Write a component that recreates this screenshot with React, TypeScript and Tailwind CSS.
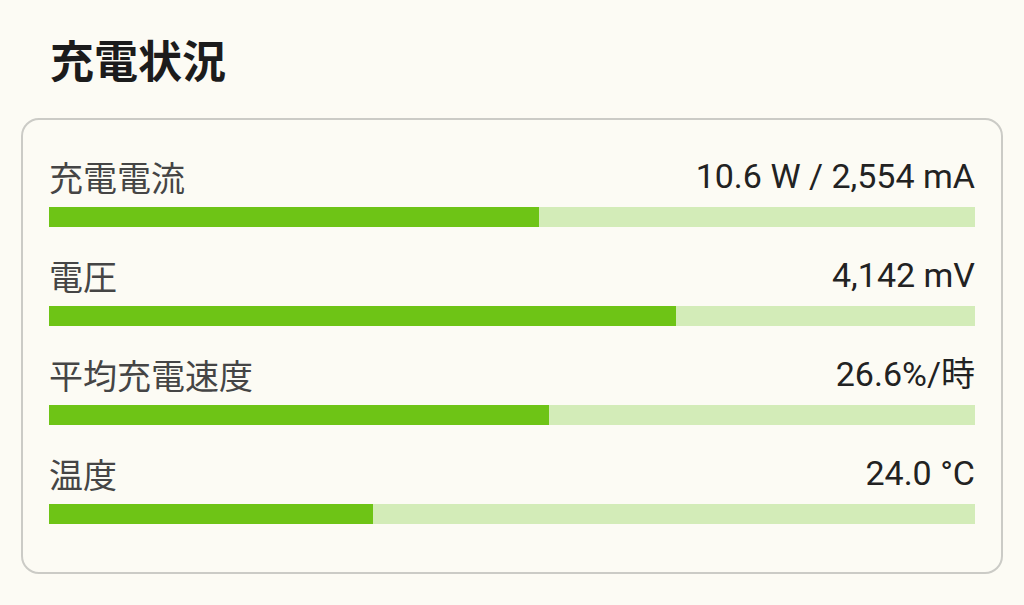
import React from "react";

const rows = [
  { label: "充電電流", value: "10.6 W / 2,554 mA", pct: 52.9 },
  { label: "電圧", value: "4,142 mV", pct: 67.7 },
  { label: "平均充電速度", value: "26.6%/時", pct: 54.0 },
  { label: "温度", value: "24.0 °C", pct: 35.0 },
];

export default function App() {
  return (
    <div
      className="w-[1024px] h-[605px] bg-[#fcfbf4] overflow-hidden pl-[21px] pr-[21px] pt-[28px]"
      style={{ fontFamily: 'Roboto, "Noto Sans CJK JP", sans-serif' }}
    >
      <h1
        className="text-[44px] leading-[62px] font-bold text-[#1c1c1c] pl-[29px] mb-[28px]"
        style={{ fontFamily: '"Noto Sans CJK JP", sans-serif' }}
      >
        充電状況
      </h1>
      <div className="border-2 border-[#cbcbc6] rounded-[18px] px-[26px] pt-[36px] pb-[20px]">
        {rows.map((r) => (
          <div key={r.label} className="mb-[28px]">
            <div className="flex justify-between items-center h-[40px] mb-[11px]">
              <span
                className="text-[34px] text-[#454545]"
                style={{ fontFamily: '"Noto Sans CJK JP", sans-serif' }}
              >
                {r.label}
              </span>
              <span className="text-[34px] text-[#222222]">{r.value}</span>
            </div>
            <div className="h-[20px] bg-[#d3ecb8]">
              <div className="h-full bg-[#6ec416]" style={{ width: `${r.pct}%` }} />
            </div>
          </div>
        ))}
      </div>
    </div>
  );
}
